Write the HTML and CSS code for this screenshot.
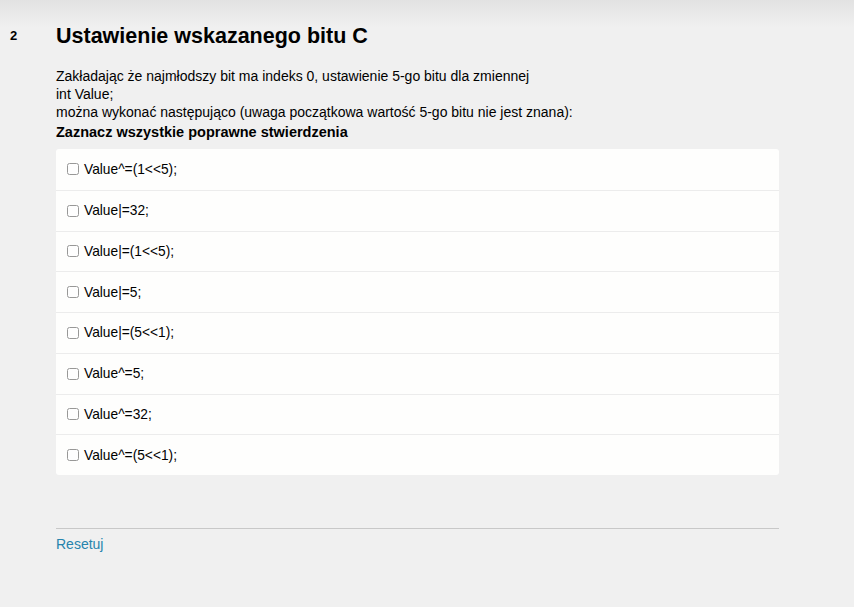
FILE: index.html
```html
<!DOCTYPE html>
<html lang="pl">
<head>
<meta charset="utf-8">
<link rel="stylesheet" href="styles.css">
</head>
<body>
<div class="shade"></div>
<div class="question">
  <div class="qnum">2</div>
  <div class="qbody">
    <h1 class="title">Ustawienie wskazanego bitu C</h1>
    <div class="text">
      Zakładając że najmłodszy bit ma indeks 0, ustawienie 5-go bitu dla zmiennej<br>
      int Value;<br>
      można wykonać następująco (uwaga początkowa wartość 5-go bitu nie jest znana):
    </div>
    <div class="prompt">Zaznacz wszystkie poprawne stwierdzenia</div>
    <div class="card">
      <label class="opt"><input type="checkbox"><span>Value^=(1&lt;&lt;5);</span></label>
      <label class="opt"><input type="checkbox"><span>Value|=32;</span></label>
      <label class="opt"><input type="checkbox"><span>Value|=(1&lt;&lt;5);</span></label>
      <label class="opt"><input type="checkbox"><span>Value|=5;</span></label>
      <label class="opt"><input type="checkbox"><span>Value|=(5&lt;&lt;1);</span></label>
      <label class="opt"><input type="checkbox"><span>Value^=5;</span></label>
      <label class="opt"><input type="checkbox"><span>Value^=32;</span></label>
      <label class="opt"><input type="checkbox"><span>Value^=(5&lt;&lt;1);</span></label>
    </div>
    <div class="footer">
      <a class="reset" href="#">Resetuj</a>
    </div>
  </div>
</div>
</body>
</html>
```

FILE: styles.css
```css
html, body {
  margin: 0;
  padding: 0;
  background: #f0f0f0;
  height: 100%;
}
body {
  font-family: "Liberation Sans", Arial, sans-serif;
  color: #000;
  position: relative;
}
.shade {
  position: absolute;
  left: 0;
  right: 0;
  top: 0;
  height: 28px;
  background: linear-gradient(#e2e2e2, #f0f0f0);
}
.question {
  position: relative;
  display: flex;
  padding-top: 24px;
}
.qnum {
  width: 46px;
  padding-left: 10px;
  font-size: 13px;
  font-weight: bold;
  line-height: 24px;
}
.qbody {
  width: 723px;
}
.title {
  margin: 0;
  font-size: 21.5px;
  line-height: 24px;
  font-weight: bold;
}
.text {
  margin-top: 19px;
  font-size: 14px;
  line-height: 18px;
}
.prompt {
  margin-top: 2px;
  font-size: 14.5px;
  font-weight: bold;
  line-height: 18px;
}
.card {
  margin-top: 8px;
  background: #fefefd;
  border-radius: 3px;
  display: flex;
  flex-direction: column;
}
.opt {
  box-sizing: border-box;
  display: flex;
  align-items: center;
  height: 40.75px;
  padding-left: 10px;
  font-size: 13.75px;
  border-top: 1px solid #ececec;
}
.opt:first-child {
  border-top: none;
}
.opt input {
  margin: 0 5px 0 1px;
  width: 12px;
  height: 12px;
  opacity: 0.75;
}
.footer {
  margin-top: 53px;
  border-top: 1px solid #c8c8c8;
  padding-top: 6px;
}
.reset {
  font-size: 14px;
  color: #2784ad;
  text-decoration: none;
}
```
